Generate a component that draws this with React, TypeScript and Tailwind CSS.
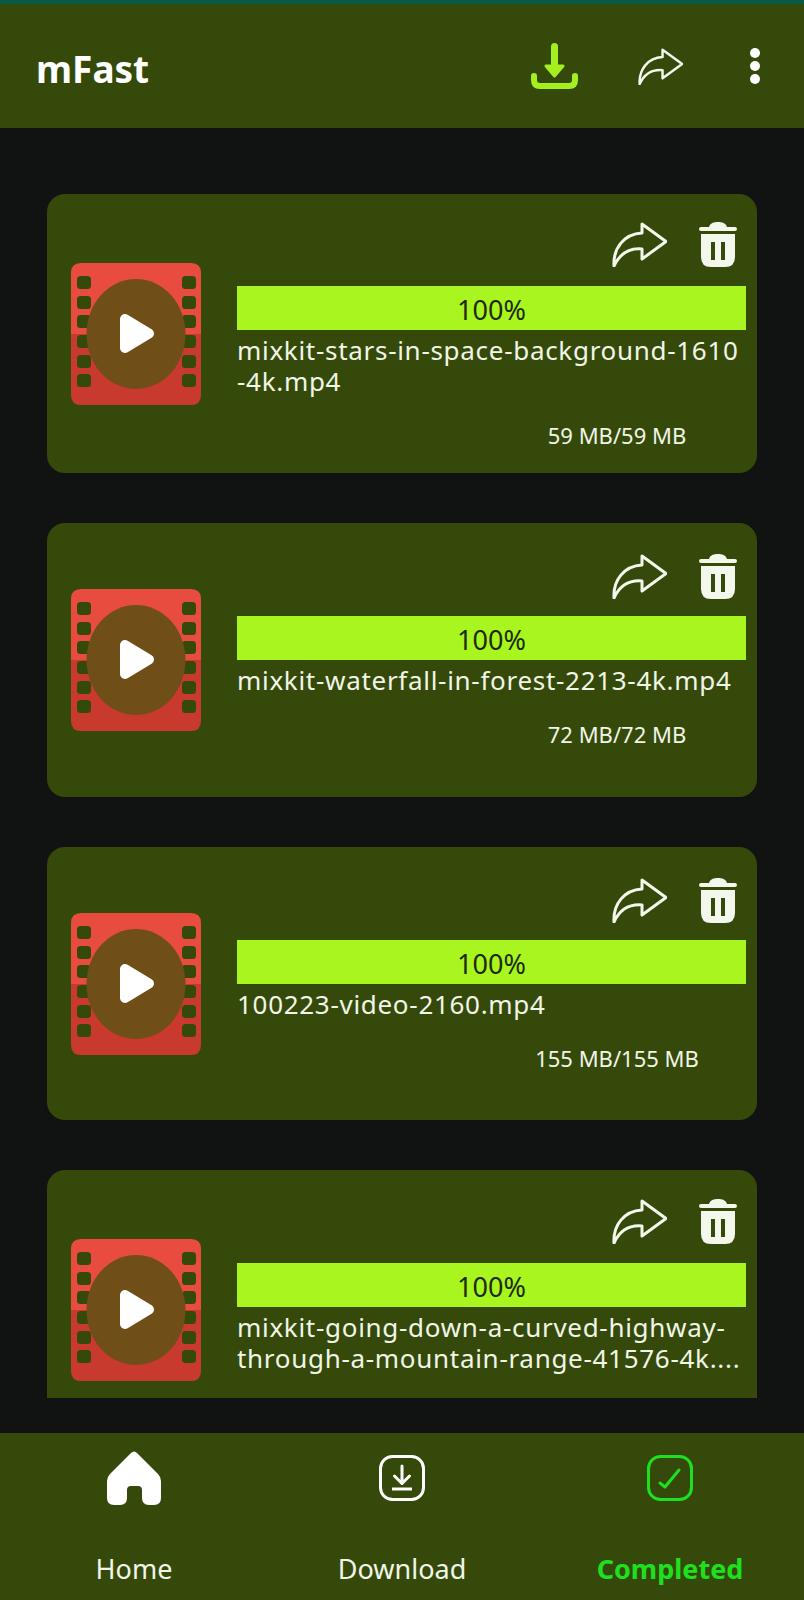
const files = [
  { name: "mixkit-stars-in-space-background-1610\n-4k.mp4", size: "59 MB/59 MB", height: "h-[279px]", top: "pt-[28px]", gap: "mb-[19px]" },
  { name: "mixkit-waterfall-in-forest-2213-4k.mp4", size: "72 MB/72 MB", height: "h-[274px]", top: "pt-[31px]", gap: "mb-[17px]" },
  { name: "100223-video-2160.mp4", size: "155 MB/155 MB", height: "h-[273px]", top: "pt-[31px]", gap: "mb-[17px]" },
  { name: "mixkit-going-down-a-curved-highway-\nthrough-a-mountain-range-41576-4k....", size: "", height: "h-[279px]", top: "pt-[29px]", gap: "mb-[19px]" },
];

const ShareIcon = ({ className }: { className: string }) => (
  <svg viewBox="0 0 55 45" className={className} fill="none" stroke="#f4f7ec" strokeWidth="3" strokeLinejoin="round">
    <path d="M30 2 L54 19.5 L30 37 L30 27 C18 26 8 31 2 44 C1 26 12 12 30 11 Z" />
  </svg>
);

const TrashIcon = () => (
  <svg viewBox="0 0 38 45" className="w-[38px] h-[45px]">
    <path d="M10 5 C11 1 15 0 19 0 C23 0 27 1 28 5 L36 5 Q38 5 38 7 Q38 9 36 9 L2 9 Q0 9 0 7 Q0 5 2 5 Z" fill="#f4f7ec" />
    <path d="M2 12 H36 V35 Q36 45 26 45 H12 Q2 45 2 35 Z" fill="#f4f7ec" />
    <rect x="12" y="20" width="4" height="18" fill="#354a0a" />
    <rect x="22" y="20" width="4" height="18" fill="#354a0a" />
  </svg>
);

const FilmIcon = () => {
  const holes = [13, 33, 52, 72, 92, 111];
  return (
    <svg viewBox="0 0 130 142" className="w-[130px] h-[142px] shrink-0">
      <path d="M10 0 H120 Q130 0 130 10 V71 H0 V10 Q0 0 10 0 Z" fill="#e74c3f" />
      <path d="M0 71 H130 V132 Q130 142 120 142 H10 Q0 142 0 132 Z" fill="#c83a2d" />
      {holes.map((y) => (
        <g key={y} fill="#354a0a">
          <rect x="6" y={y} width="14" height="13" rx="3.5" />
          <rect x="111" y={y} width="14" height="13" rx="3.5" />
        </g>
      ))}
      <ellipse cx="65" cy="71" rx="49.5" ry="55" fill="#6f4e17" />
      <path d="M54 56 L78 70.5 L54 85 Z" fill="#fff" stroke="#fff" strokeWidth="10" strokeLinejoin="round" />
    </svg>
  );
};

const HomeIcon = () => (
  <svg viewBox="0 0 54 54" className="w-[54px] h-[54px]">
    <path
      d="M24 2 Q27 -1 30 2 L51 23 Q54 26 54 30 V47 Q54 54 47 54 H42 Q35 54 35 47 V39 Q35 35 31 35 H24 Q20 35 20 39 V47 Q20 54 13 54 H7 Q0 54 0 47 V30 Q0 26 3 23 Z"
      fill="#fff"
    />
  </svg>
);

type CardProps = { name: string; size: string; height: string; top: string; gap: string };

const Card = ({ name, size, height, top, gap }: CardProps) => (
  <div className={`${height} shrink-0 mx-[47px] rounded-[18px] bg-[#354a0a] flex items-center pl-[24px] pr-[11px] gap-[36px]`}>
    <FilmIcon />
    <div className={`self-stretch flex-1 min-w-0 ${top}`}>
      <div className={`flex justify-end items-center gap-[32px] pr-[9px] h-[45px] ${gap}`}>
        <ShareIcon className="w-[55px] h-[45px]" />
        <TrashIcon />
      </div>
      <div className="h-[44px] bg-[#a8f520] flex items-center justify-center pt-[5px] text-[27px] text-[#1d2b0c]">100%</div>
      <p className="mt-[5px] text-[26px] tracking-[0.7px] leading-[31px] text-[#f1f5e6] whitespace-pre">{name}</p>
      {size && (
        <p className="mt-[24px] ml-[251px] w-[258px] text-center text-[22px] leading-[28px] text-[#f1f5e6]">{size}</p>
      )}
    </div>
  </div>
);

export default function App() {
  return (
    <div className="w-[804px] h-[1600px] overflow-hidden flex flex-col bg-[#111312] font-['Noto_Sans',sans-serif]">
      <div className="h-[4px] bg-[#0a5a4a]" />
      <header className="h-[124px] bg-[#354a0a] flex items-center pl-[36px] pr-[44px]">
        <h1 className="text-[37px] font-bold text-white mt-[6px]">mFast</h1>
        <div className="ml-auto flex items-center">
          <svg viewBox="0 0 47 46" className="w-[47px] h-[46px]">
            <rect x="20" y="0" width="7" height="24" rx="3.5" fill="#a4f01f" />
            <path d="M15 23 H32 L23.5 33 Z" fill="#a4f01f" stroke="#a4f01f" strokeWidth="3" strokeLinejoin="round" />
            <path d="M3 33 V37 Q3 43 9 43 H38 Q44 43 44 37 V33" fill="none" stroke="#a4f01f" strokeWidth="6" strokeLinecap="round" />
          </svg>
          <ShareIcon className="w-[45px] h-[37px] ml-[60px]" />
          <div className="ml-[67px] flex flex-col gap-[3px]">
            <span className="w-[10px] h-[10px] rounded-full bg-white" />
            <span className="w-[10px] h-[10px] rounded-full bg-white" />
            <span className="w-[10px] h-[10px] rounded-full bg-white" />
          </div>
        </div>
      </header>
      <main className="h-[1270px] overflow-hidden pt-[66px] flex flex-col gap-[50px]">
        {files.map((file) => (
          <Card key={file.name} {...file} />
        ))}
      </main>
      <nav className="mt-[35px] h-[167px] bg-[#354a0a] grid grid-cols-3 pt-[18px]">
        <div className="flex flex-col items-center">
          <div className="h-[54px] flex items-center"><HomeIcon /></div>
          <span className="mt-[48px] text-[27px] leading-[32px] text-[#f1f5e6]">Home</span>
        </div>
        <div className="flex flex-col items-center">
          <div className="h-[54px] flex items-center">
            <svg viewBox="0 0 46 46" className="w-[46px] h-[46px]" fill="none" stroke="#fff" strokeWidth="3" strokeLinecap="round" strokeLinejoin="round">
              <rect x="1.5" y="1.5" width="43" height="43" rx="12" />
              <path d="M23 11 V28 M15.5 21 L23 28.5 L30.5 21" />
              <path d="M13 34 H33" strokeLinecap="butt" />
            </svg>
          </div>
          <span className="mt-[48px] text-[27px] leading-[32px] text-[#f1f5e6]">Download</span>
        </div>
        <div className="flex flex-col items-center">
          <div className="h-[54px] flex items-center">
            <svg viewBox="0 0 46 46" className="w-[46px] h-[46px]" fill="none" stroke="#1fe01f" strokeWidth="3" strokeLinecap="round" strokeLinejoin="round">
              <rect x="1.5" y="1.5" width="43" height="43" rx="12" />
              <path d="M13 28 L18 32 L32 15" />
            </svg>
          </div>
          <span className="mt-[48px] text-[27px] leading-[32px] font-bold text-[#1fe01f]">Completed</span>
        </div>
      </nav>
    </div>
  );
}
